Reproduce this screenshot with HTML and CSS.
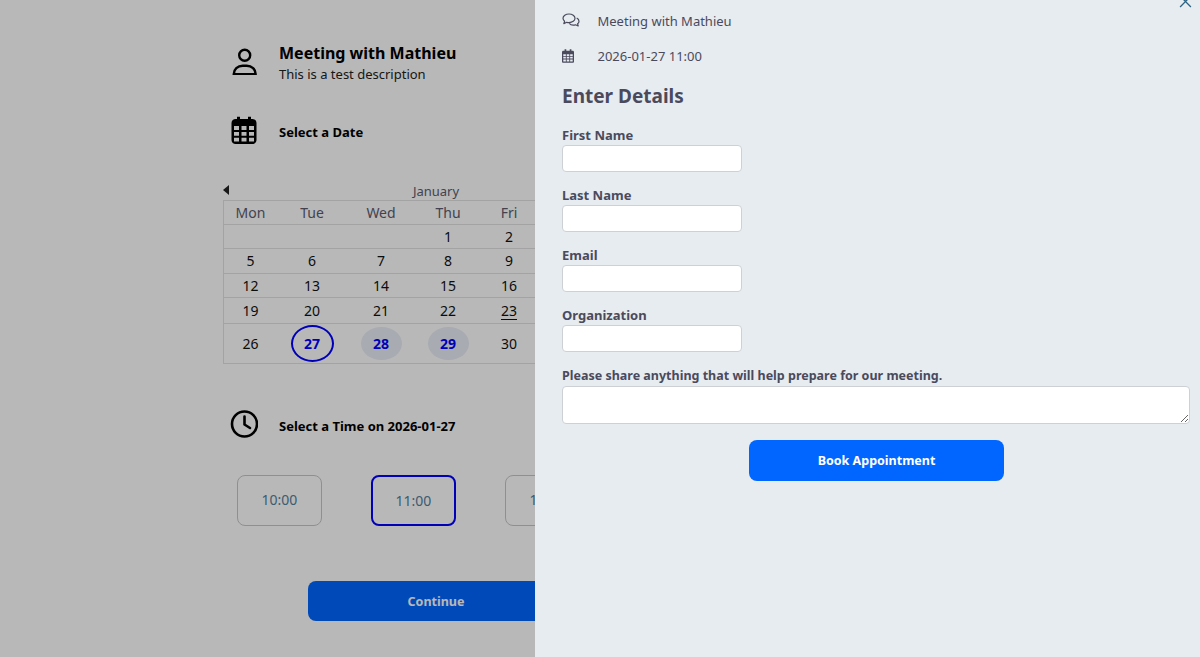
FILE: index.html
```html
<!DOCTYPE html>
<html lang="en">
<head>
  <meta charset="UTF-8">
  <meta name="viewport" content="width=device-width, initial-scale=1.0">
  <title>Book a Meeting</title>
  <link rel="stylesheet" href="styles.css">
</head>
<body>
  <div class="page">
    <div class="section section-head">
      <svg class="section-icon" viewBox="0 0 28 28" fill="none" stroke="#000" stroke-width="2.4"><circle cx="14.700" cy="8.300" r="5.500"/><path d="M3.700 27.200c0-5 4-8.500 9-8.500h4c5 0 9 3.500 9 8.500z" stroke-linejoin="round"/></svg>
      <div class="head-text">
        <h1>Meeting with Mathieu</h1>
        <p>This is a test description</p>
      </div>
    </div>

    <div class="section section-date">
      <svg class="section-icon" viewBox="0 0 28 28"><path fill="#000" fill-rule="evenodd" d="M7 .7h3V3h8V.7h3V3h1.500C24.500 3 26.500 4.500 26.500 7v17c0 2.500-2 4-4 4h-17c-2 0-4-1.500-4-4V7c0-2.500 2-4 4-4H7zM4 10v4h5v-4zm7.500 0v4h5v-4zm7.500 0v4h5v-4zM4 16v3.800h5V16zm7.500 0v3.800h5V16zm7.500 0v3.800h5V16zM4 21.800v3.700h5v-3.700zm7.500 0v3.700h5v-3.700zm7.500 0v3.700h5v-3.700z"/></svg>
      <h2>Select a Date</h2>
    </div>

    <div class="calendar">
      <div class="cal-title">
        <svg class="cal-prev" viewBox="0 0 6 10"><path fill="#222" d="M6 0v10L0 5z"/></svg>
        <span>January</span>
      </div>
      <div class="cal-row cal-days"><span>Mon</span><span>Tue</span><span>Wed</span><span>Thu</span><span>Fri</span></div>
      <div class="cal-row"><span></span><span></span><span></span><span>1</span><span>2</span></div>
      <div class="cal-row"><span>5</span><span>6</span><span>7</span><span>8</span><span>9</span></div>
      <div class="cal-row"><span>12</span><span>13</span><span>14</span><span>15</span><span>16</span></div>
      <div class="cal-row cal-row-tall"><span>19</span><span>20</span><span>21</span><span>22</span><span class="today">23</span></div>
      <div class="cal-row cal-row-last"><span>26</span><span><b class="day day-selected">27</b></span><span><b class="day">28</b></span><span><b class="day">29</b></span><span>30</span></div>
    </div>

    <div class="section section-time">
      <svg class="section-icon" viewBox="0 0 28 28" fill="none" stroke="#000" stroke-width="2.600"><circle cx="14.500" cy="14" r="12.500"/><path d="M14.500 6.500V14.500l5.500 3.500" stroke-linecap="round" stroke-linejoin="round"/></svg>
      <h2>Select a Time on 2026-01-27</h2>
    </div>

    <div class="slots">
      <div class="slot">10:00</div>
      <div class="slot slot-selected">11:00</div>
      <div class="slot">12:00</div>
    </div>

    <button class="continue">Continue</button>
  </div>

  <div class="backdrop"></div>

  <aside class="drawer">
    <svg class="close" viewBox="0 0 12 12" fill="none" stroke="#2e6384" stroke-width="1.200"><path d="M1 1l10 10M11 1L1 11"/></svg>

    <div class="summary">
      <svg class="summary-icon" viewBox="0 0 18 16" fill="none" stroke="#4a4a5c" stroke-width="1.200" stroke-linejoin="round"><path d="M7 1c3.300 0 6 1.900 6 4.300S10.300 9.600 7 9.600c-.8 0-1.500-.1-2.200-.3L1.800 10.600l.8-2.400C1.500 7.400 1 6.400 1 5.300 1 2.900 3.700 1 7 1z"/><path d="M14.700 5c1.400.7 2.300 1.900 2.300 3.200 0 1-.5 1.900-1.400 2.600l.6 2.200-2.700-1.200c-2.400.6-5 .1-6.200-1.500"/></svg>
      <span>Meeting with Mathieu</span>
    </div>
    <div class="summary summary-date">
      <svg class="summary-icon" viewBox="0 0 14 16"><path fill="#4a4a5c" fill-rule="evenodd" d="M3 0h2v2h4V0h2v2h1.500C13.400 2 14 2.700 14 3.500v11c0 .8-.6 1.500-1.500 1.500h-11C.6 16 0 15.300 0 14.500v-11C0 2.700.6 2 1.500 2H3zM1.500 6v2h3V6zm4 0v2h3V6zm4 0v2h3V6zm-8 3v2h3V9zm4 0v2h3V9zm4 0v2h3V9zm-8 3v2.500h3V12zm4 0v2.500h3V12zm4 0v2.500h3V12z"/></svg>
      <span>2026-01-27 11:00</span>
    </div>

    <h3>Enter Details</h3>

    <form class="details">
      <div class="field">
        <label for="first-name">First Name</label>
        <input id="first-name" type="text">
      </div>
      <div class="field">
        <label for="last-name">Last Name</label>
        <input id="last-name" type="text">
      </div>
      <div class="field">
        <label for="email">Email</label>
        <input id="email" type="text">
      </div>
      <div class="field">
        <label for="organization">Organization</label>
        <input id="organization" type="text">
      </div>
      <div class="field field-wide">
        <label for="notes">Please share anything that will help prepare for our meeting.</label>
        <textarea id="notes"></textarea>
      </div>
      <button type="button" class="book">Book Appointment</button>
    </form>
  </aside>
</body>
</html>
```

FILE: styles.css
```css
html, body {
  height: 100%;
}
body {
  margin: 0;
  overflow: hidden;
  background-color: #ffffff;
  color: #000000;
  font-family: "Noto Sans", sans-serif;
}

.page {
  width: 426px;
  margin-left: 223px;
}
.section {
  display: flex;
  align-items: center;
  gap: 21px;
  padding-left: 7px;
}
.section-head {
  padding-top: 44px;
  height: 33px;
}
.section-date {
  margin-top: 38px;
  height: 29px;
}
.section-time {
  margin-top: 45px;
  height: 30px;
}
.section-icon {
  width: 28px;
  height: 28px;
  flex: none;
}
.head-text {
  padding-top: 4px;
}
h1 {
  margin: 0;
  font-size: 16px;
  line-height: 20px;
  font-weight: 700;
}
.section-head p {
  margin: 3px 0 0;
  font-size: 13px;
  line-height: 17px;
  color: #222222;
}
h2 {
  margin: 0;
  padding-top: 4px;
  font-size: 13px;
  font-weight: 700;
}

.calendar {
  margin-top: 38px;
  font-size: 14px;
}
.cal-title {
  display: flex;
  justify-content: center;
  position: relative;
  height: 18px;
  line-height: 18px;
  font-size: 13px;
  color: #5c5c70;
}
.cal-prev {
  position: absolute;
  left: 0;
  top: 3px;
  width: 6px;
  height: 10px;
}
.cal-row {
  display: grid;
  grid-template-columns: 53px 70px 68px 66px 56px;
  height: 23.5px;
  align-items: center;
  text-align: center;
  border-top: 1px solid #e2e2e2;
  border-left: 1px solid #e2e2e2;
  color: #111111;
}
.cal-days {
  height: 22.5px;
  color: #5c5c70;
}
.cal-row-tall {
  height: 25px;
}
.cal-row-last {
  height: 39px;
  border-bottom: 1px solid #e2e2e2;
}
.today {
  text-decoration: underline;
  text-underline-offset: 3px;
}
.day {
  display: inline-block;
  width: 41px;
  height: 33px;
  line-height: 33px;
  border-radius: 50%;
  background-color: #e9edf6;
  color: #0000ff;
  font-weight: 700;
}
.day-selected {
  box-sizing: border-box;
  width: 43px;
  height: 37px;
  line-height: 33px;
  border: 2px solid #0000ff;
  background: none;
}

.slots {
  display: flex;
  gap: 49px;
  margin-top: 36px;
  padding-left: 14px;
}
.slot {
  box-sizing: border-box;
  flex: none;
  width: 85px;
  height: 51px;
  line-height: 47px;
  text-align: center;
  border: 1px solid #c7c7c7;
  border-radius: 8px;
  font-size: 14px;
  color: #55809c;
}
.slot-selected {
  border: 2px solid #0000ff;
}
.continue {
  display: block;
  width: 256px;
  height: 40px;
  margin: 55px 0 0 85px;
  border: none;
  border-radius: 8px;
  background-color: #0066ff;
  color: #ffffff;
  font-family: inherit;
  font-size: 12.5px;
  font-weight: 700;
}

.backdrop {
  position: fixed;
  inset: 0;
  background-color: rgba(0, 0, 0, 0.28);
}

.drawer {
  position: fixed;
  top: 0;
  right: 0;
  bottom: 0;
  width: 665px;
  box-sizing: border-box;
  padding: 11px 9px 0 27px;
  background-color: #e7ecf0;
  color: #4a4a5c;
}
.close {
  position: absolute;
  top: -5px;
  left: 644px;
  width: 13px;
  height: 13px;
}
.summary {
  display: flex;
  align-items: center;
  gap: 17.5px;
  height: 20px;
  font-size: 13px;
}
.summary-date {
  margin-top: 15px;
}
.summary-icon {
  width: 18px;
  height: 16px;
  flex: none;
}
.summary-date .summary-icon {
  width: 12px;
  height: 14px;
  margin-right: 6px;
}
h3 {
  margin: 15px 0 0;
  font-size: 19px;
  line-height: 30px;
  font-weight: 700;
}
.details {
  display: flex;
  flex-direction: column;
  margin-top: 15px;
}
.field {
  height: 60px;
  font-size: 13px;
  line-height: 19px;
  font-weight: 700;
}
.field label {
  display: block;
}
.field input,
.field textarea {
  display: block;
  box-sizing: border-box;
  width: 180px;
  height: 27px;
  margin: 0;
  border: 1px solid #cdd1d5;
  border-radius: 4px;
  background-color: #ffffff;
}
.field-wide {
  height: 74px;
  font-size: 12.5px;
  line-height: 20px;
}
.field-wide textarea {
  width: 628px;
  height: 38px;
}
.book {
  align-self: center;
  width: 255px;
  height: 41px;
  border: none;
  border-radius: 8px;
  background-color: #0066ff;
  color: #ffffff;
  font-family: inherit;
  font-size: 12.5px;
  font-weight: 700;
}
```
